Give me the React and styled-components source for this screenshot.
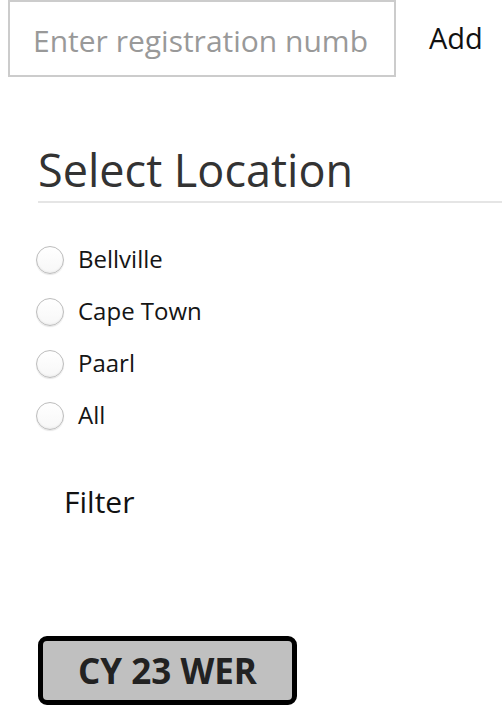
import React from "react";
import styled, { createGlobalStyle } from "styled-components";

const GlobalStyle = createGlobalStyle`
  body {
    margin: 0;
    background: #ffffff;
    font-family: "Open Sans", "Liberation Sans", sans-serif;
    color: #222222;
  }
`;

const Page = styled.div`
  width: 502px;
  height: 728px;
  overflow: hidden;
`;

const AddForm = styled.form`
  display: flex;
  align-items: center;
  padding-left: 8px;
`;

const RegInput = styled.input`
  box-sizing: border-box;
  width: 388px;
  height: 77px;
  padding: 4px 25px 0 23px;
  border: 2px solid #cccccc;
  outline: none;
  font-family: "Open Sans", sans-serif;
  font-size: 30px;
  color: #333333;

  &::placeholder {
    color: #999999;
  }
`;

const TextButton = styled.button`
  padding: 0;
  border: none;
  background: none;
  font-family: "Open Sans", sans-serif;
  font-size: 29px;
  color: #111111;
  cursor: pointer;
`;

const AddButton = styled(TextButton)`
  margin-left: 33px;
  margin-top: -3px;
`;

const Locations = styled.div`
  padding-left: 38px;
`;

const Heading = styled.h2`
  margin: 70px 0 0;
  padding: 0 0 9px;
  border-bottom: 2px solid #e5e5e5;
  font-size: 45px;
  font-weight: 400;
  line-height: 1;
  color: #333333;
`;

const Options = styled.div`
  display: flex;
  flex-direction: column;
  margin-top: 29px;
`;

const Option = styled.label`
  display: flex;
  align-items: center;
  gap: 14px;
  height: 52px;
  font-size: 24px;
  color: #151515;
`;

const Radio = styled.input.attrs({ type: "radio" })`
  appearance: none;
  box-sizing: border-box;
  width: 28px;
  height: 28px;
  margin: 3px 0 0 -2px;
  border: 1px solid #bdbdbd;
  border-radius: 50%;
  background: linear-gradient(#ffffff, #f7f7f7);
  box-shadow: 0 1px 1px rgba(0, 0, 0, 0.1), inset 0 -1px 2px rgba(0, 0, 0, 0.06);
`;

const FilterButton = styled(TextButton)`
  margin: 42px 0 0 26px;
  font-size: 30px;
  line-height: 1.32;
`;

const Plate = styled.div`
  box-sizing: border-box;
  display: flex;
  align-items: center;
  justify-content: center;
  width: 259px;
  height: 69px;
  margin: 114px 0 0 38px;
  border: 5px solid #000000;
  border-radius: 9px;
  background: #c0c0c0;
  font-size: 35px;
  font-weight: 700;
  color: #222222;
`;

const towns = ["Bellville", "Cape Town", "Paarl", "All"];

export default function App() {
  return (
    <Page>
      <GlobalStyle />
      <AddForm onSubmit={e => e.preventDefault()}>
        <RegInput placeholder="Enter registration number" />
        <AddButton type="submit">Add</AddButton>
      </AddForm>
      <Locations role="radiogroup">
        <Heading>Select Location</Heading>
        <Options>
          {towns.map(town =>
            <Option key={town}>
              <Radio name="location" value={town} />
              {town}
            </Option>
          )}
        </Options>
        <FilterButton type="button">Filter</FilterButton>
      </Locations>
      <Plate>CY 23 WER</Plate>
    </Page>
  );
}
